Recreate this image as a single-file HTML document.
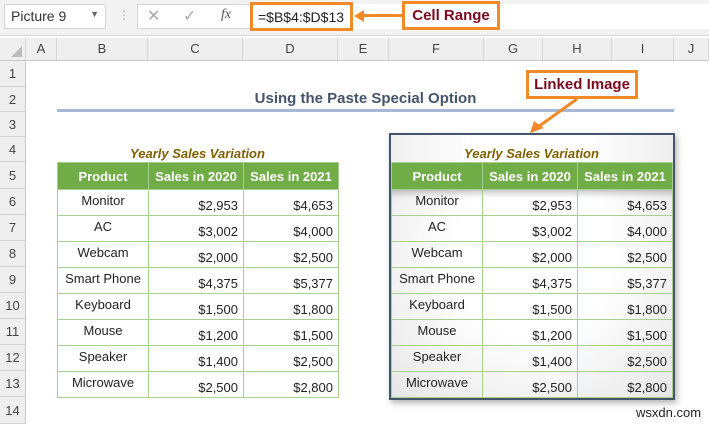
<!DOCTYPE html>
<html><head><meta charset="utf-8"><style>
*{margin:0;padding:0;box-sizing:border-box}
body{width:709px;height:424px;overflow:hidden;background:#fff;font-family:"Liberation Sans",Calibri,sans-serif;position:relative}
.a{position:absolute}
.hdr{background:#efefef;color:#444;font-size:13px;text-align:center;border-right:1px solid #d4d4d4;border-bottom:1px solid #c8c8c8}
.rn{background:#efefef;color:#444;font-size:13px;text-align:center;border-bottom:1px solid #d4d4d4;border-right:1px solid #c8c8c8;width:26px;left:0}
table{border-collapse:collapse;position:absolute;font-size:13px;color:#222;table-layout:fixed}
td{border:1px solid #a9d08e;height:26px;padding:0 5px;white-space:nowrap;overflow:hidden}
th{background:#70ad47;color:#fff;border:1px solid #a9d08e;height:27px;font-size:13px;white-space:nowrap;padding:0 2px}
td.p{text-align:center;vertical-align:top;padding-top:3px}
td.n{text-align:right;vertical-align:bottom;padding-bottom:2px}
.title{color:#806000;font-style:italic;font-weight:bold;font-size:13px;text-align:center}
</style></head><body>
<div class="a" style="left:0;top:0;width:709px;height:36px;background:#f2f2f2;border-bottom:1px solid #d8d8d8"></div>
<div class="a" style="left:4px;top:4px;width:102px;height:25px;background:#fff;border:1px solid #d6d6d6;font-size:14px;padding:3px 6px;color:#333">Picture 9<span style="position:absolute;right:6px;top:4px;font-size:9px;color:#666">▼</span></div>
<div class="a" style="left:118px;top:8px;color:#aaa;font-size:12px">⋮</div>
<div class="a" style="left:137px;top:4px;width:115px;height:25px;background:#fff;border:1px solid #d6d6d6"></div>
<div class="a" style="left:147px;top:6px;color:#aaa;font-size:16px">✕</div>
<div class="a" style="left:183px;top:6px;color:#aaa;font-size:16px">✓</div>
<div class="a" style="left:221px;top:7px;color:#555;font-size:14px;font-style:italic;font-family:'Liberation Serif',serif">fx</div>
<div class="a" style="left:252px;top:4px;width:457px;height:25px;background:#fff"></div>
<div class="a" style="left:250px;top:2px;width:103px;height:29px;border:3px solid #f4892a;font-size:14px;padding:4px 5px;color:#222;white-space:nowrap">=$B$4:$D$13</div>
<div class="a" style="left:358px;top:14px;width:44px;height:3px;background:#f4892a"></div>
<div class="a" style="left:354px;top:10px;width:0;height:0;border-top:6px solid transparent;border-bottom:6px solid transparent;border-right:10px solid #f4892a"></div>
<div class="a" style="left:402px;top:1px;width:98px;height:29px;border:3px solid #f4892a;background:#fff;color:#7b0a1c;font-weight:bold;font-size:15px;text-align:center;line-height:23px">Cell Range</div>
<div class="a hdr" style="left:0;top:38px;width:26px;height:23px"><span style="position:absolute;right:3px;bottom:3px;width:0;height:0;border-left:11px solid transparent;border-bottom:11px solid #bbb"></span></div>
<div class="a hdr" style="left:26px;top:38px;width:31px;height:23px;line-height:22px">A</div>
<div class="a hdr" style="left:57px;top:38px;width:91px;height:23px;line-height:22px">B</div>
<div class="a hdr" style="left:148px;top:38px;width:95px;height:23px;line-height:22px">C</div>
<div class="a hdr" style="left:243px;top:38px;width:95px;height:23px;line-height:22px">D</div>
<div class="a hdr" style="left:338px;top:38px;width:51px;height:23px;line-height:22px">E</div>
<div class="a hdr" style="left:389px;top:38px;width:95px;height:23px;line-height:22px">F</div>
<div class="a hdr" style="left:484px;top:38px;width:59px;height:23px;line-height:22px">G</div>
<div class="a hdr" style="left:543px;top:38px;width:69px;height:23px;line-height:22px">H</div>
<div class="a hdr" style="left:612px;top:38px;width:62px;height:23px;line-height:22px">I</div>
<div class="a hdr" style="left:674px;top:38px;width:35px;height:23px;line-height:22px">J</div>
<div class="a rn" style="top:61px;height:26px;line-height:26px">1</div>
<div class="a rn" style="top:87px;height:25px;line-height:25px">2</div>
<div class="a rn" style="top:112px;height:25px;line-height:25px">3</div>
<div class="a rn" style="top:137px;height:25px;line-height:25px">4</div>
<div class="a rn" style="top:162px;height:27px;line-height:27px">5</div>
<div class="a rn" style="top:189px;height:26px;line-height:26px">6</div>
<div class="a rn" style="top:215px;height:26px;line-height:26px">7</div>
<div class="a rn" style="top:241px;height:26px;line-height:26px">8</div>
<div class="a rn" style="top:267px;height:26px;line-height:26px">9</div>
<div class="a rn" style="top:293px;height:26px;line-height:26px">10</div>
<div class="a rn" style="top:319px;height:26px;line-height:26px">11</div>
<div class="a rn" style="top:345px;height:26px;line-height:26px">12</div>
<div class="a rn" style="top:371px;height:26px;line-height:26px">13</div>
<div class="a rn" style="top:397px;height:27px;line-height:27px">14</div>
<div class="a" style="left:57px;top:90px;width:617px;text-align:center;color:#44546a;font-weight:bold;font-size:15px">Using the Paste Special Option</div>
<div class="a" style="left:57px;top:109px;width:617px;height:3px;background:#a6b8d6"></div>
<div class="a" style="left:526px;top:70px;width:112px;height:29px;border:3px solid #f4892a;background:#fff;color:#7b0a1c;font-weight:bold;font-size:15px;text-align:center;line-height:23px">Linked Image</div>
<svg class="a" style="left:520px;top:97px" width="60" height="40"><line x1="57" y1="2" x2="18" y2="30" stroke="#f4892a" stroke-width="3"/><polygon points="10,36 14,24 24,31" fill="#f4892a"/></svg>
<div class="a title" style="left:57px;top:146px;width:281px">Yearly Sales Variation</div>
<table style="left:57px;top:162px;width:281px">
<colgroup><col style="width:91px"><col style="width:95px"><col style="width:95px"></colgroup>
<tr><th>Product</th><th>Sales in 2020</th><th>Sales in 2021</th></tr>
<tr><td class="p">Monitor</td><td class="n">$2,953</td><td class="n">$4,653</td></tr>
<tr><td class="p">AC</td><td class="n">$3,002</td><td class="n">$4,000</td></tr>
<tr><td class="p">Webcam</td><td class="n">$2,000</td><td class="n">$2,500</td></tr>
<tr><td class="p">Smart Phone</td><td class="n">$4,375</td><td class="n">$5,377</td></tr>
<tr><td class="p">Keyboard</td><td class="n">$1,500</td><td class="n">$1,800</td></tr>
<tr><td class="p">Mouse</td><td class="n">$1,200</td><td class="n">$1,500</td></tr>
<tr><td class="p">Speaker</td><td class="n">$1,400</td><td class="n">$2,500</td></tr>
<tr><td class="p">Microwave</td><td class="n">$2,500</td><td class="n">$2,800</td></tr>
</table>
<div class="a" style="left:389px;top:133px;width:286px;height:267px;border:2px solid #44546a;background:linear-gradient(90deg,#f0f0f0,#fff 30%,#fff 70%,#eee);box-shadow:2px 3px 6px rgba(0,0,0,.3)"></div>
<div class="a title" style="left:391px;top:146px;width:281px">Yearly Sales Variation</div>
<table style="left:391px;top:162px;width:281px;background:radial-gradient(ellipse at 50% 40%,#fff 40%,#e6e6e6)">
<colgroup><col style="width:91px"><col style="width:95px"><col style="width:95px"></colgroup>
<tr><th>Product</th><th>Sales in 2020</th><th>Sales in 2021</th></tr>
<tr><td class="p" style="box-shadow:inset 0 8px 8px -6px rgba(0,0,0,.3)">Monitor</td><td class="n" style="box-shadow:inset 0 8px 8px -6px rgba(0,0,0,.3)">$2,953</td><td class="n" style="box-shadow:inset 0 8px 8px -6px rgba(0,0,0,.3)">$4,653</td></tr>
<tr><td class="p">AC</td><td class="n">$3,002</td><td class="n">$4,000</td></tr>
<tr><td class="p">Webcam</td><td class="n">$2,000</td><td class="n">$2,500</td></tr>
<tr><td class="p">Smart Phone</td><td class="n">$4,375</td><td class="n">$5,377</td></tr>
<tr><td class="p">Keyboard</td><td class="n">$1,500</td><td class="n">$1,800</td></tr>
<tr><td class="p">Mouse</td><td class="n">$1,200</td><td class="n">$1,500</td></tr>
<tr><td class="p">Speaker</td><td class="n">$1,400</td><td class="n">$2,500</td></tr>
<tr><td class="p">Microwave</td><td class="n">$2,500</td><td class="n">$2,800</td></tr>
</table>
<div class="a" style="left:636px;top:405px;font-size:13px;color:#222">wsxdn.com</div>
</body></html>
